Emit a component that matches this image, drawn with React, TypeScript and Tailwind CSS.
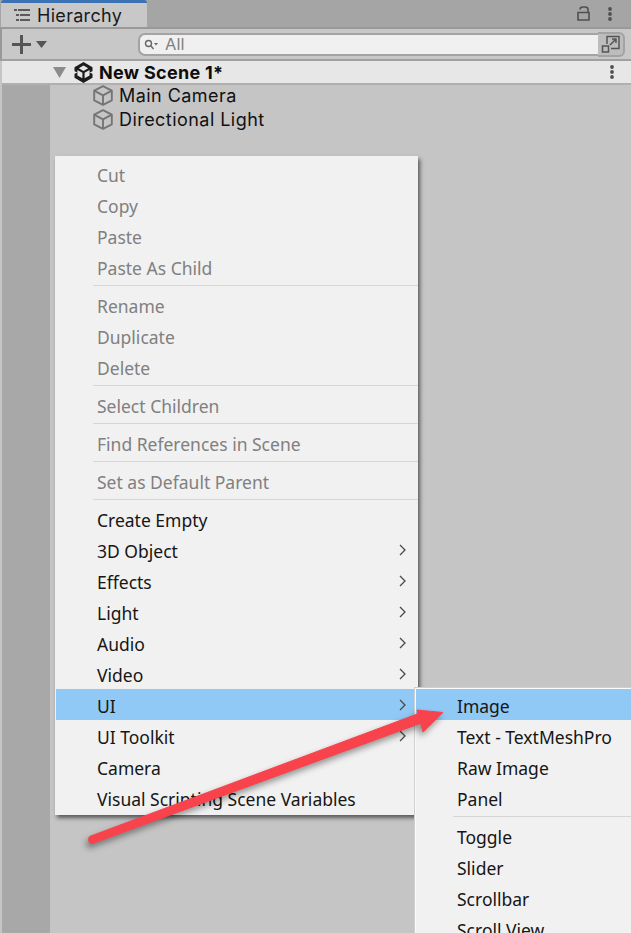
import React from 'react';

type Item = { label: string; disabled?: boolean; sub?: boolean; active?: boolean } | 'sep';

const MAIN_ITEMS: Item[] = [
  { label: 'Cut', disabled: true },
  { label: 'Copy', disabled: true },
  { label: 'Paste', disabled: true },
  { label: 'Paste As Child', disabled: true },
  'sep',
  { label: 'Rename', disabled: true },
  { label: 'Duplicate', disabled: true },
  { label: 'Delete', disabled: true },
  'sep',
  { label: 'Select Children', disabled: true },
  'sep',
  { label: 'Find References in Scene', disabled: true },
  'sep',
  { label: 'Set as Default Parent', disabled: true },
  'sep',
  { label: 'Create Empty' },
  { label: '3D Object', sub: true },
  { label: 'Effects', sub: true },
  { label: 'Light', sub: true },
  { label: 'Audio', sub: true },
  { label: 'Video', sub: true },
  { label: 'UI', sub: true, active: true },
  { label: 'UI Toolkit', sub: true },
  { label: 'Camera' },
  { label: 'Visual Scripting Scene Variables' },
];

const SUB_ITEMS: Item[] = [
  { label: 'Image', active: true },
  { label: 'Text - TextMeshPro' },
  { label: 'Raw Image' },
  { label: 'Panel' },
  'sep',
  { label: 'Toggle' },
  { label: 'Slider' },
  { label: 'Scrollbar' },
  { label: 'Scroll View' },
];

const MenuRows: React.FC<{ items: Item[]; gutter: string; text: string }> = ({ items, gutter, text }) => (
  <>
    {items.map((item, idx) => {
      if (item === 'sep') {
        return (
          <div key={idx} className={`h-[7px] flex items-center ${gutter}`}>
            <div className="h-px w-full bg-[#d6d6d6]" />
          </div>
        );
      }
      return (
        <div
          key={idx}
          className={`h-[31px] flex items-center ${text} ${item.active ? 'bg-[#90c8f6]' : ''} ${item.disabled ? 'text-[#808080]' : 'text-[#161616]'}`}
        >
          <span className="flex-1 whitespace-nowrap pt-[3px]">{item.label}</span>
          {item.sub && (
            <svg className="mr-[12px]" width="7" height="12" viewBox="0 0 7 12" fill="none" stroke="#4a4a4a" strokeWidth="1.3">
              <path d="M1 1 6 6 1 11" />
            </svg>
          )}
        </div>
      );
    })}
  </>
);

const CubeIcon: React.FC = () => (
  <svg width="20" height="21" viewBox="0 0 20 21" fill="none" stroke="#757575" strokeWidth="1.9" strokeLinejoin="round">
    <path d="M10 1.2 18.8 5.7V15.3L10 19.8 1.2 15.3V5.7Z" />
    <path d="M1.2 5.7 10 10.4 18.8 5.7M10 10.4V19.8" />
  </svg>
);

const UnityIcon: React.FC = () => (
  <svg width="19" height="21" viewBox="0 0 19 21">
    <path d="M9.5 0 18.5 5.2V15.8L9.5 21 0.5 15.8V5.2Z" fill="#1c1c1c" />
    <path d="M9.5 3.4 14.2 6.2 9.5 8.9 4.8 6.2Z" fill="#e7e7e7" />
    <path d="M3.4 8 8.4 10.8V16.2L3.4 13.4Z" fill="#e7e7e7" />
    <path d="M15.6 8 10.6 10.8V16.2L15.6 13.4Z" fill="#e7e7e7" />
    <path d="M0 9 3.4 10.5 0 12Z" fill="#e7e7e7" />
    <path d="M19 9 15.6 10.5 19 12Z" fill="#e7e7e7" />
  </svg>
);

const Dots: React.FC = () => (
  <svg width="4" height="14" viewBox="0 0 4 14" fill="#505050">
    <circle cx="2" cy="2" r="1.9" />
    <circle cx="2" cy="7" r="1.9" />
    <circle cx="2" cy="12" r="1.9" />
  </svg>
);

export default function App() {
  return (
    <div className="relative w-[631px] h-[933px] overflow-hidden bg-[#c5c5c5] font-['Inter',sans-serif] text-[#111111]">
      {/* tab bar */}
      <div className="h-[29px] bg-[#a5a5a5] flex items-start border-b-2 border-[#999999]">
        <div className="ml-[1px] w-[146px] h-[27px] bg-[#c8c8c8] border-t-[3px] border-[#3a72b4] rounded-t-[3px] flex items-center pl-[13px] gap-[7px] shrink-0">
          <svg width="16" height="12" viewBox="0 0 16 12" fill="#5a5a5a">
            <rect x="0" y="0" width="3" height="2" />
            <rect x="4" y="0" width="12" height="2" />
            <rect x="2" y="5" width="3" height="2" />
            <rect x="6" y="5" width="10" height="2" />
            <rect x="2" y="10" width="3" height="2" />
            <rect x="6" y="10" width="10" height="2" />
          </svg>
          <span className="text-[18px] tracking-[0.3px] text-[#1a1a1a]">Hierarchy</span>
        </div>
        <div className="flex-1 h-[27px] flex items-center justify-end pr-[19px] gap-[18px]">
          <svg width="13" height="15" viewBox="0 0 13 15" fill="none" stroke="#505050" strokeWidth="1.6">
            <path d="M1 6.5H12V14H1Z" />
            <path d="M3 3.5Q3 1 6 1H8Q11 1 11 3.5V6.5" />
          </svg>
          <Dots />
        </div>
      </div>

      {/* toolbar */}
      <div className="h-[32px] bg-[#c8c8c8] flex items-center border-l-2 border-[#999999] border-b-2 border-b-[#a0a0a0]">
        <div className="w-[136px] flex items-center pl-[10px] gap-[5px]">
          <svg width="19" height="19" viewBox="0 0 19 19" fill="#555555">
            <rect x="8" y="0" width="3" height="19" />
            <rect x="0" y="8" width="19" height="3" />
          </svg>
          <svg width="11" height="7" viewBox="0 0 11 7" fill="#555555">
            <path d="M0 0H11L5.5 7Z" />
          </svg>
        </div>
        <div className="w-[460px] h-[23px] bg-[#f0f0f0] border-2 border-r-0 border-[#a3a3a3] rounded-l-[7px] flex items-center pl-[4px] gap-[7px] text-[#808080] text-[16.5px]">
          <svg width="14" height="11" viewBox="0 0 14 11" fill="none" stroke="#666666" strokeWidth="1.4">
            <circle cx="4.5" cy="4.5" r="3" />
            <path d="M7 7 9.5 10" />
            <path d="M10 4H14L12 6.5Z" fill="#666666" stroke="none" />
          </svg>
          <span className="leading-none">All</span>
        </div>
        <div className="w-[27px] h-[25px] bg-[#bdbdbd] border-2 border-l-0 border-[#a3a3a3] rounded-r-[6px] flex items-center justify-center">
          <svg width="20" height="20" viewBox="0 0 20 20" fill="none" stroke="#555555" strokeWidth="1.5">
            <path d="M6 10V2.5H18V14.5H10" />
            <path d="M9 11 15 5M11 5H15V9" />
            <rect x="1.5" y="12" width="6" height="6" />
          </svg>
        </div>
      </div>

      {/* scene row */}
      <div className="ml-[2px] h-[24px] bg-[#e7e7e7] border-b-2 border-[#b0b0b0] flex items-center">
        <svg className="ml-[51px]" width="13" height="11" viewBox="0 0 13 11" fill="#8c8c8c">
          <path d="M0 0H13L6.5 11Z" />
        </svg>
        <div className="ml-[8px] flex">
          <UnityIcon />
        </div>
        <span className="ml-[6px] flex-1 font-bold text-[18px] tracking-[0.3px] text-[#0d0d0d]">New Scene 1*</span>
        <div className="mr-[17px] flex">
          <Dots />
        </div>
      </div>

      {/* tree */}
      <div className="flex h-[848px]">
        <div className="ml-[2px] w-[48px] bg-[#a8a8a8]" />
        <div className="pl-[43px] -mt-[2px]">
          {['Main Camera', 'Directional Light'].map((name) => (
            <div key={name} className="h-[24px] flex items-center gap-[6px]">
              <CubeIcon />
              <span className="text-[18px] tracking-[0.45px] text-[#111111]">{name}</span>
            </div>
          ))}
        </div>
      </div>

      {/* context menu */}
      <div className="absolute left-[55px] top-[156px] w-[363px] h-[659px] bg-[#f1f1f1] py-[2px] pl-px shadow-[2px_3px_4px_rgba(0,0,0,0.55)] font-['Noto_Sans',sans-serif]">
        <MenuRows items={MAIN_ITEMS} gutter="ml-[37px]" text="pl-[41px] text-[17.5px]" />
      </div>

      {/* submenu */}
      <div className="absolute left-[414px] top-[687px] w-[240px] h-[260px] bg-[#f1f1f1] border border-[#cfcfcf] pt-px pl-px shadow-[inset_0_0_0_1px_#fafafa] font-['Noto_Sans',sans-serif]">
        <MenuRows items={SUB_ITEMS} gutter="ml-[37px]" text="pl-[41px] text-[17.5px]" />
      </div>

      {/* annotation arrow */}
      <svg className="absolute left-0 top-0 pointer-events-none drop-shadow-[-2px_4px_3px_rgba(0,0,0,0.4)]" width="631" height="933" viewBox="0 0 631 933">
        <path d="M89.5 836.5 Q87 841 91 844 L424 722 420 713Z" fill="#f8434c" stroke="#f8434c" strokeWidth="1" strokeLinejoin="round" />
        <path d="M417 710 443 712.5 423 732Z" fill="#f8434c" stroke="#f8434c" strokeWidth="1" strokeLinejoin="round" />
      </svg>
    </div>
  );
}
